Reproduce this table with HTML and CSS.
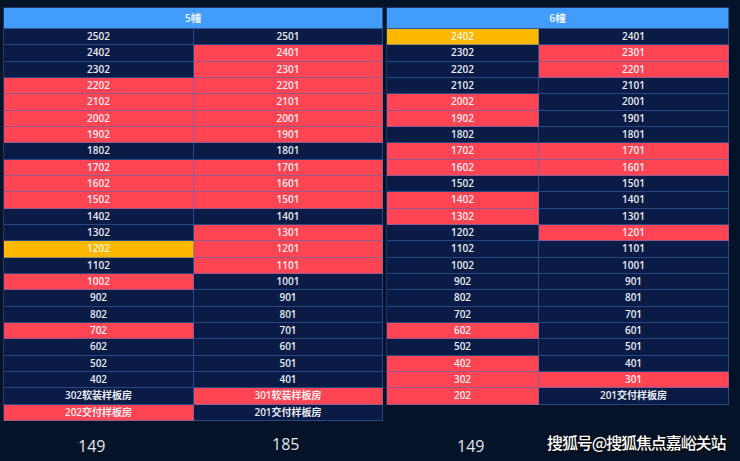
FILE: index.html
```html
<!DOCTYPE html>
<html lang="zh">
<head>
<meta charset="utf-8">
<link rel="stylesheet" href="styles.css">
</head>
<body>
<div class="page">
  <div class="towers">
    <div class="tower tower-5">
      <div class="head">5幢</div>
      <div class="cell">2502</div><div class="cell">2501</div>
      <div class="cell">2402</div><div class="cell red">2401</div>
      <div class="cell">2302</div><div class="cell red">2301</div>
      <div class="cell red">2202</div><div class="cell red">2201</div>
      <div class="cell red">2102</div><div class="cell red">2101</div>
      <div class="cell red">2002</div><div class="cell red">2001</div>
      <div class="cell red">1902</div><div class="cell red">1901</div>
      <div class="cell">1802</div><div class="cell">1801</div>
      <div class="cell red">1702</div><div class="cell red">1701</div>
      <div class="cell red">1602</div><div class="cell red">1601</div>
      <div class="cell red">1502</div><div class="cell red">1501</div>
      <div class="cell">1402</div><div class="cell">1401</div>
      <div class="cell">1302</div><div class="cell red">1301</div>
      <div class="cell yellow">1202</div><div class="cell red">1201</div>
      <div class="cell">1102</div><div class="cell red">1101</div>
      <div class="cell red">1002</div><div class="cell">1001</div>
      <div class="cell">902</div><div class="cell">901</div>
      <div class="cell">802</div><div class="cell">801</div>
      <div class="cell red">702</div><div class="cell">701</div>
      <div class="cell">602</div><div class="cell">601</div>
      <div class="cell">502</div><div class="cell">501</div>
      <div class="cell">402</div><div class="cell">401</div>
      <div class="cell">302软装样板房</div><div class="cell red">301软装样板房</div>
      <div class="cell red">202交付样板房</div><div class="cell">201交付样板房</div>
    </div>
    <div class="tower tower-6">
      <div class="head">6幢</div>
      <div class="cell yellow">2402</div><div class="cell">2401</div>
      <div class="cell">2302</div><div class="cell red">2301</div>
      <div class="cell">2202</div><div class="cell red">2201</div>
      <div class="cell">2102</div><div class="cell">2101</div>
      <div class="cell red">2002</div><div class="cell">2001</div>
      <div class="cell red">1902</div><div class="cell">1901</div>
      <div class="cell">1802</div><div class="cell">1801</div>
      <div class="cell red">1702</div><div class="cell red">1701</div>
      <div class="cell red">1602</div><div class="cell red">1601</div>
      <div class="cell">1502</div><div class="cell">1501</div>
      <div class="cell red">1402</div><div class="cell">1401</div>
      <div class="cell red">1302</div><div class="cell">1301</div>
      <div class="cell">1202</div><div class="cell red">1201</div>
      <div class="cell">1102</div><div class="cell">1101</div>
      <div class="cell">1002</div><div class="cell">1001</div>
      <div class="cell">902</div><div class="cell">901</div>
      <div class="cell">802</div><div class="cell">801</div>
      <div class="cell">702</div><div class="cell">701</div>
      <div class="cell red">602</div><div class="cell">601</div>
      <div class="cell">502</div><div class="cell">501</div>
      <div class="cell red">402</div><div class="cell">401</div>
      <div class="cell red">302</div><div class="cell red">301</div>
      <div class="cell red">202</div><div class="cell">201交付样板房</div>
    </div>
  </div>
  <div class="footer">
    <span class="count c1">149</span>
    <span class="count c2">185</span>
    <span class="count c3">149</span>
    <span class="mark">搜狐号@搜狐焦点嘉峪关站</span>
  </div>
</div>
</body>
</html>
```
FILE: styles.css
```css
html, body {
  margin: 0;
  padding: 0;
  background: #04132a;
  height: 100%;
}
.page {
  width: 740px;
  height: 461px;
  overflow: hidden;
  background: #041328;
  font-family: "Open Sans", "Noto Sans CJK SC", sans-serif;
}
.towers {
  display: flex;
  align-items: flex-start;
  gap: 3px;
  padding: 7px 0 0 3px;
}
.tower {
  display: grid;
  grid-template-rows: 21px;
  grid-auto-rows: 16.33px;
  border-top: 1px solid #1d3868;
  border-left: 1px solid #1d3868;
  box-sizing: border-box;
}
.tower-5 {
  width: 380px;
  grid-template-columns: 190px 189px;
}
.tower-6 {
  width: 343px;
  grid-template-columns: 152px 190px;
}
.head {
  grid-column: 1 / span 2;
  height: 21px;
  box-sizing: border-box;
  background: #419cfb;
  color: #eaf3ff;
  font-size: 10.5px;
  font-weight: 600;
  line-height: 20px;
  text-align: center;
  border-right: 1px solid #2b5a9a;
  border-bottom: 1px solid #2b5a9a;
}
.cell {
  background: #0a1b45;
  color: #e8ecf4;
  font-size: 10px;
  font-weight: 600;
  line-height: 15.33px;
  text-align: center;
  white-space: nowrap;
  overflow: hidden;
  border-right: 1px solid rgba(60, 110, 190, 0.55);
  border-bottom: 1px solid rgba(60, 110, 190, 0.55);
  box-sizing: border-box;
  height: 16.33px;
}
.cell.red {
  background: #ff4554;
  color: #fbe9ec;
}
.cell.yellow {
  background: #ffb800;
  color: #fff6dc;
}
.footer {
  display: flex;
  align-items: flex-start;
  padding: 14px 0 0 78px;
  color: #e2e5ea;
  font-family: "Open Sans", "Noto Sans", sans-serif;
  font-size: 16px;
  line-height: 20px;
}
.count {
  display: block;
}
.c1 {
  width: 194px;
  padding-top: 1px;
}
.c2 {
  width: 185px;
  margin-top: -1px;
}
.c3 {
  width: 90px;
  padding-top: 1px;
}
.mark {
  font-family: "Noto Sans CJK SC", sans-serif;
  font-size: 16px;
  font-weight: 500;
  color: #ffffff;
  letter-spacing: -1.1px;
  text-shadow: 1px 1px 1px #000, 0 0 2px rgba(0,0,0,0.8);
  margin-top: -3px;
}
```
